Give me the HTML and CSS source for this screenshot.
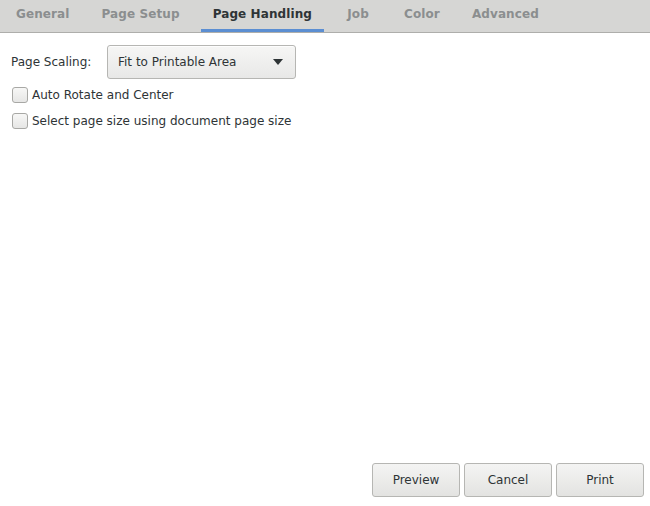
FILE: index.html
```html
<!DOCTYPE html>
<html>
<head>
<meta charset="utf-8">
<link rel="stylesheet" href="styles.css">
</head>
<body>
<div class="dialog">
  <div class="tabbar">
    <div class="tab">General</div>
    <div class="tab">Page Setup</div>
    <div class="tab active">Page Handling</div>
    <div class="tab narrow">Job</div>
    <div class="tab">Color</div>
    <div class="tab">Advanced</div>
  </div>
  <div class="content">
    <div class="row">
      <span class="label">Page Scaling:</span>
      <div class="combo">
        <span>Fit to Printable Area</span>
        <svg class="arrow" width="10" height="6" viewBox="0 0 10 6"><path d="M0 0 H10 L5 6 Z" fill="#2e3436"/></svg>
      </div>
    </div>
    <label class="check"><span class="box"></span><span>Auto Rotate and Center</span></label>
    <label class="check"><span class="box"></span><span>Select page size using document page size</span></label>
  </div>
  <div class="footer">
    <button class="btn">Preview</button>
    <button class="btn">Cancel</button>
    <button class="btn">Print</button>
  </div>
</div>
</body>
</html>
```
FILE: styles.css
```css
html, body {
  margin: 0;
  padding: 0;
  background: #ffffff;
}
body {
  font-family: "DejaVu Sans", sans-serif;
  font-size: 12px;
  color: #2e3436;
}
.dialog {
  display: flex;
  flex-direction: column;
  height: 506px;
}
.tabbar {
  display: flex;
  height: 32px;
  background: #d6d6d4;
  border-bottom: 1px solid #aeaeab;
  box-sizing: content-box;
}
.tab {
  margin: 0 4px;
  padding: 0 12px;
  height: 29px;
  line-height: 29px;
  font-weight: bold;
  letter-spacing: 0.1px;
  color: #8b8e8f;
  border-bottom: 3px solid transparent;
  text-align: center;
}
.tab.narrow {
  min-width: 28px;
}
.tab.active {
  color: #2e3436;
  border-bottom-color: #5b8ed2;
  margin-left: 5px;
}
.content {
  padding: 12px 11px 0 11px;
  display: flex;
  flex-direction: column;
}
.row {
  display: flex;
  align-items: center;
  height: 34px;
  margin-bottom: 8px;
}
.label {
  width: 96px;
}
.combo {
  box-sizing: border-box;
  width: 189px;
  height: 34px;
  border: 1px solid #b6b6b3;
  border-radius: 3px;
  background: linear-gradient(#f6f6f5, #e8e8e7);
  display: flex;
  align-items: center;
  justify-content: space-between;
  padding: 0 12px 0 10px;
  box-shadow: 0 1px 0 rgba(255,255,255,0.8) inset;
}
.arrow {
  display: block;
}
.check {
  display: flex;
  align-items: center;
  height: 16px;
  margin-bottom: 10px;
  padding-left: 1px;
}
.box {
  box-sizing: border-box;
  width: 16px;
  height: 16px;
  border: 1px solid #a8a8a5;
  border-radius: 3px;
  background: linear-gradient(#f7f7f6, #e6e6e5);
  margin-right: 4px;
}
.footer {
  margin-top: auto;
  display: flex;
  justify-content: flex-end;
  gap: 4px;
  padding: 0 6px 9px 0;
}
.btn {
  box-sizing: border-box;
  width: 88px;
  height: 34px;
  font-family: "DejaVu Sans", sans-serif;
  font-size: 12px;
  color: #2e3436;
  border: 1px solid #b6b6b3;
  border-radius: 3px;
  background: linear-gradient(#f4f4f3, #e3e3e1);
  padding: 0;
}
```
